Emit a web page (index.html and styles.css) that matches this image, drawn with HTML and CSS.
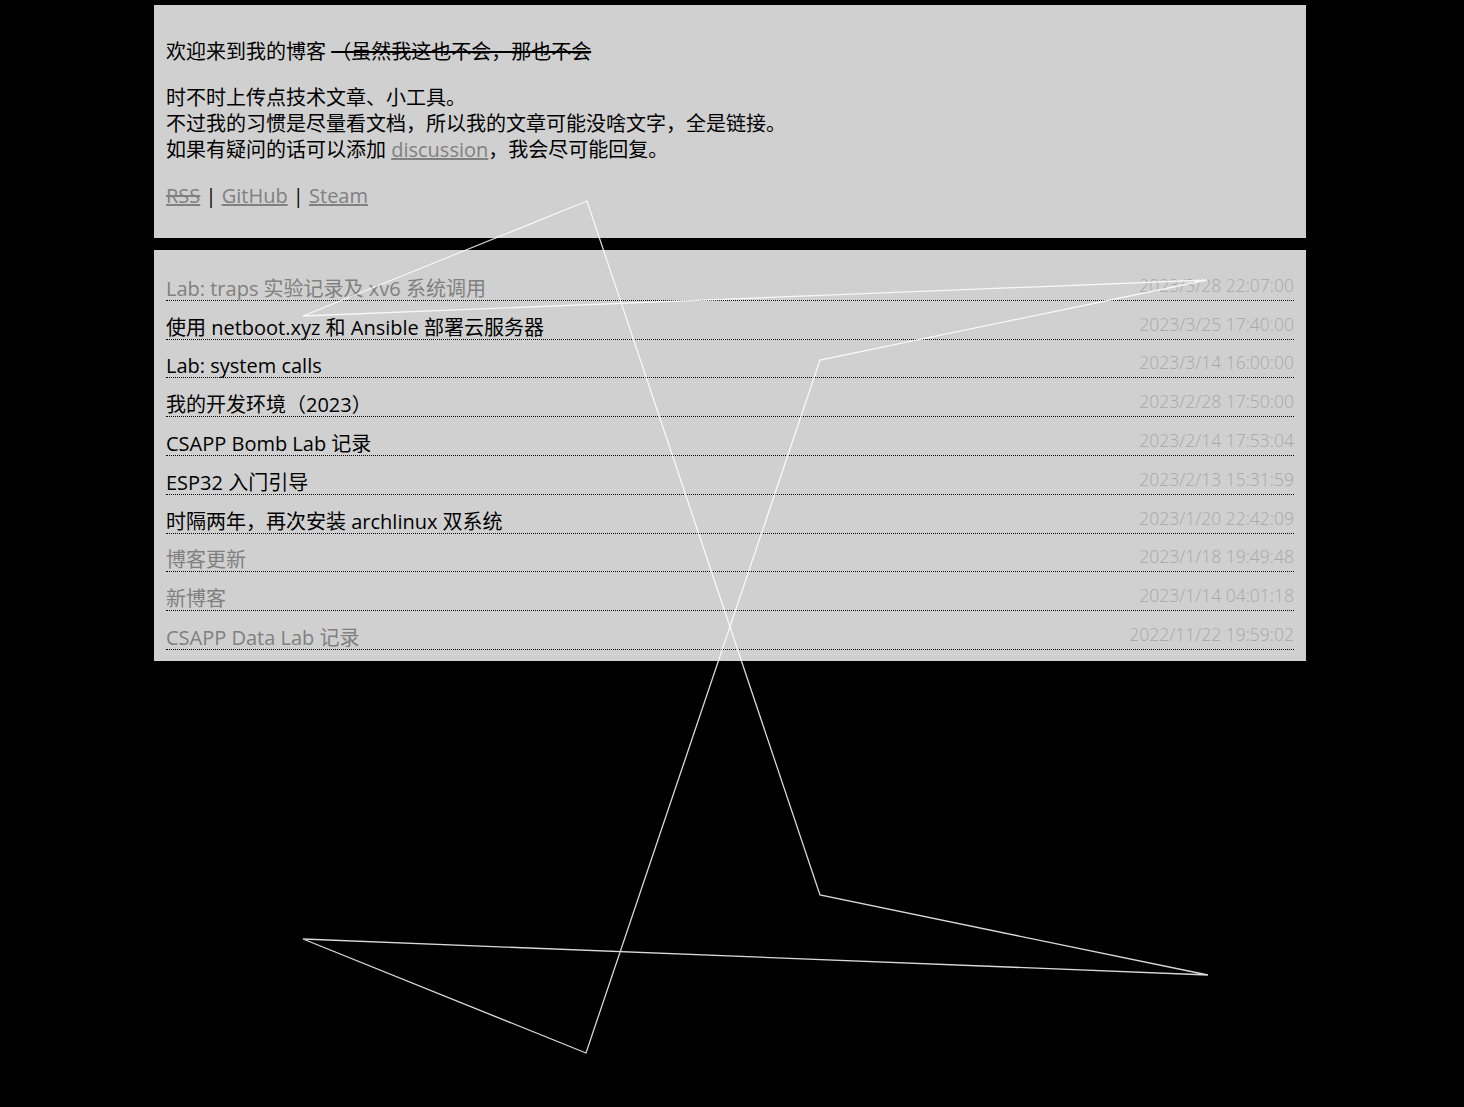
FILE: index.html
```html
<!DOCTYPE html>
<html lang="zh-CN">
<head>
<meta charset="utf-8">
<title>博客</title>
<link rel="stylesheet" href="styles.css">
</head>
<body>
<div class="page">
  <section class="panel intro">
    <p>欢迎来到我的博客 <del>（虽然我这也不会，那也不会</del></p>
    <p>时不时上传点技术文章、小工具。<br>不过我的习惯是尽量看文档，所以我的文章可能没啥文字，全是链接。<br>如果有疑问的话可以添加 <a class="link" href="#">discussion</a>，我会尽可能回复。</p>
    <p><a class="link" href="#"><del>RSS</del></a> | <a class="link" href="#">GitHub</a> | <a class="link" href="#">Steam</a></p>
  </section>
  <section class="panel posts">
    <ul class="list">
      <li class="row"><a class="title read" href="#">Lab: traps 实验记录及 xv6 系统调用</a><span class="date">2023/3/28 22:07:00</span></li>
      <li class="row"><a class="title" href="#">使用 netboot.xyz 和 Ansible 部署云服务器</a><span class="date">2023/3/25 17:40:00</span></li>
      <li class="row"><a class="title" href="#">Lab: system calls</a><span class="date">2023/3/14 16:00:00</span></li>
      <li class="row"><a class="title" href="#">我的开发环境（2023）</a><span class="date">2023/2/28 17:50:00</span></li>
      <li class="row"><a class="title" href="#">CSAPP Bomb Lab 记录</a><span class="date">2023/2/14 17:53:04</span></li>
      <li class="row"><a class="title" href="#">ESP32 入门引导</a><span class="date">2023/2/13 15:31:59</span></li>
      <li class="row"><a class="title" href="#">时隔两年，再次安装 archlinux 双系统</a><span class="date">2023/1/20 22:42:09</span></li>
      <li class="row"><a class="title read" href="#">博客更新</a><span class="date">2023/1/18 19:49:48</span></li>
      <li class="row"><a class="title read" href="#">新博客</a><span class="date">2023/1/14 04:01:18</span></li>
      <li class="row"><a class="title read" href="#">CSAPP Data Lab 记录</a><span class="date">2022/11/22 19:59:02</span></li>
    </ul>
  </section>
</div>
<svg class="lines" width="1464" height="1107" viewBox="0 0 1464 1107" aria-hidden="true">
  <polygon points="303,316 587,201 820,895 1208,975 303,939 586,1053 820,360 1207,280" />
</svg>
</body>
</html>
```

FILE: styles.css
```css
html, body {
  margin: 0;
  padding: 0;
  background: #000;
}
body {
  font-family: "Open Sans", "Noto Sans CJK SC", sans-serif;
  font-size: 20px;
  line-height: 26px;
  color: #000;
}
.page {
  width: 1152px;
  margin: 5px 0 0 154px;
}
.panel {
  background: #d0d0d0;
  padding: 12px;
}
.intro {
  padding-top: 14px;
  padding-bottom: 9px;
}
.intro p {
  margin: 20px 0;
}
.link {
  color: #808080;
  text-decoration: underline;
}
.posts {
  margin-top: 12px;
  padding-top: 12px;
  padding-bottom: 11px;
}
.list {
  list-style: none;
  margin: 0;
  padding: 0;
}
.row {
  display: flex;
  justify-content: space-between;
  align-items: flex-start;
  padding-top: 14.8px;
  line-height: 23px;
  border-bottom: 1px dotted #000;
}
.title {
  color: #000;
  text-decoration: none;
}
.title.read {
  color: #808080;
}
.date {
  font-size: 17.5px;
  line-height: 17px;
  font-weight: 300;
  color: #a8a8a8;
}
.lines {
  position: fixed;
  top: 0;
  left: 0;
  pointer-events: none;
}
.lines polygon {
  fill: none;
  stroke: rgba(255, 255, 255, 0.85);
  stroke-width: 1.3;
}
```
